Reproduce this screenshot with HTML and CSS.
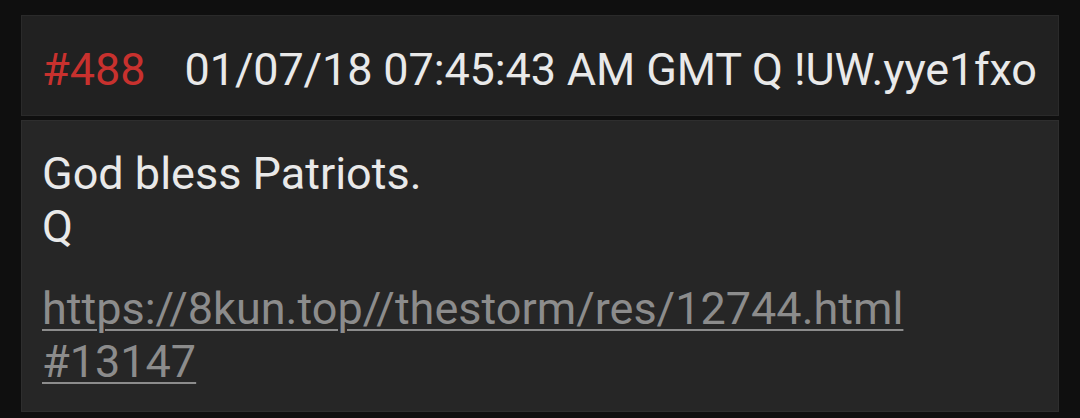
FILE: index.html
```html
<!DOCTYPE html>
<html lang="en">
<head>
    <meta charset="UTF-8">
    <meta name="viewport" content="width=device-width, initial-scale=1.0">
    <title>Q Drop #488</title>
    <link rel="stylesheet" href="styles.css">
</head>
<body>
    <div class="post">
        <div class="post-header">
            <span class="post-num">#488</span>
            <span class="post-meta">01/07/18 07:45:43 AM GMT Q !UW.yye1fxo</span>
        </div>
        <div class="post-body">
            <p class="post-text">God bless Patriots.<br>Q</p>
            <a class="post-link" href="#">https://8kun.top//thestorm/res/12744.html<br>#13147</a>
        </div>
    </div>
</body>
</html>
```

FILE: styles.css
```css
body {
    margin: 0;
    background-color: #0f0f0f;
    font-family: Roboto, "Liberation Sans", sans-serif;
    color: #e9e9e9;
}
.post {
    padding: 15px 21px 6px 21px;
    display: flex;
    flex-direction: column;
    gap: 4px;
}
.post-header {
    background: #212121;
    border: 1px solid #2a2a2a;
    padding: 27px 0 19px 20px;
    font-size: 45px;
    line-height: 53px;
    white-space: nowrap;
    overflow: hidden;
    display: flex;
    gap: 39px;
}
.post-num {
    color: #c8312e;
}
.post-meta {
    letter-spacing: -0.14px;
}
.post-body {
    background: #262626;
    border: 1px solid #2e2e2e;
    padding: 26px 20px 23px 20px;
    font-size: 45px;
    line-height: 53px;
}
.post-text {
    margin: 0 0 29px 0;
}
.post-link {
    color: #8c8c8c;
    text-decoration: underline;
    text-decoration-thickness: 2px;
    text-underline-offset: 5px;
}
```
